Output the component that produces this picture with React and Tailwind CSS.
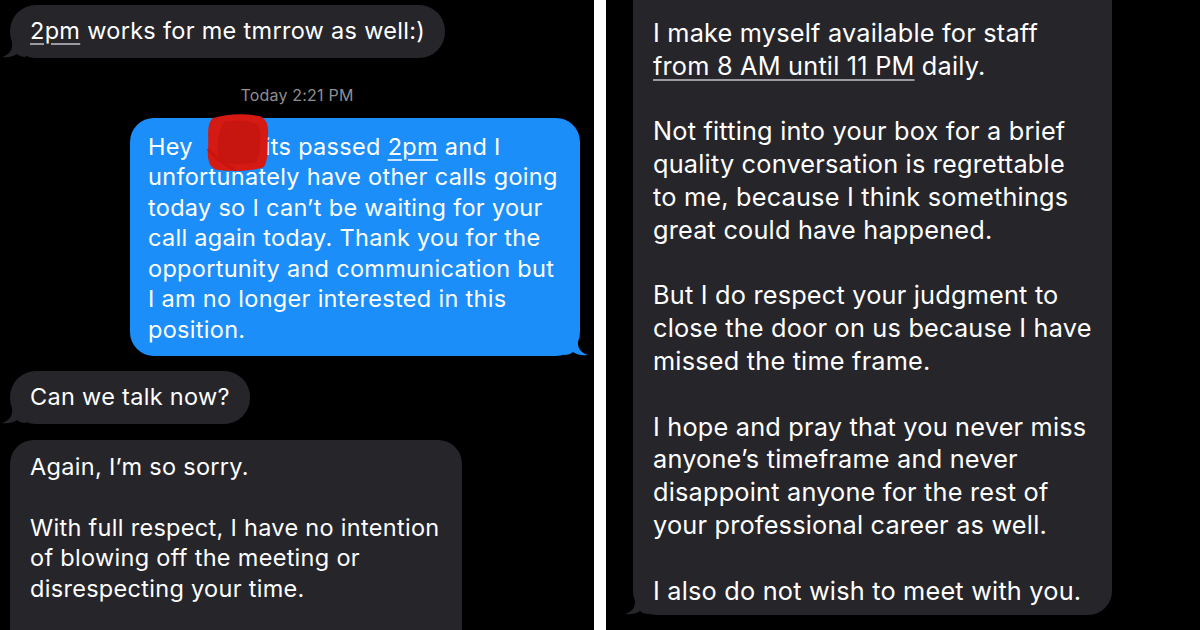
const font = { fontFamily: 'Inter, "Noto Sans", sans-serif' };

const TailLeft = ({ color }) => (
  <svg className="absolute -left-[8px] bottom-0" width="24" height="22" viewBox="0 0 24 22">
    <path d="M10 0 L10 10 C10 15 6 19 0 21 C7 22 12 20 15 18 C17 20 20 21 24 21 L24 0 Z" fill={color} />
  </svg>
);

const TailRight = ({ color }) => (
  <svg className="absolute -right-[8px] bottom-0" width="24" height="22" viewBox="0 0 24 22">
    <path d="M14 0 L14 10 C14 15 18 19 24 21 C17 22 12 20 9 18 C7 20 4 21 0 21 L0 0 Z" fill={color} />
  </svg>
);

const u = 'underline decoration-[1.5px] underline-offset-[4px] decoration-[#9a9aa0]';

export default function App() {
  return (
    <div className="flex w-[1200px] h-[630px] overflow-hidden bg-black text-white" style={font}>
      {/* left screenshot */}
      <div className="w-[594px] h-full bg-black flex flex-col pt-[5px] text-[23.5px] leading-[30.5px] tracking-[0.3px]">
        <div className="relative self-start ml-[10px] bg-[#26252a] rounded-[26px] px-[20px] py-[11px]">
          <span className={u}>2pm</span> works for me tmrrow as well:)
          <TailLeft color="#26252a" />
        </div>

        <div className="mt-[27px] text-center text-[16px] leading-[20px] text-[#8e8e93] tracking-[0.2px]">
          Today 2:21 PM
        </div>

        <div className="relative self-end mr-[14px] mt-[13px] w-[450px] bg-[#1b8ef9] rounded-[24px] pl-[18px] pr-[6px] pt-[14px] pb-[11px] whitespace-nowrap">
          Hey<span className="inline-block w-[72px]"></span>its passed <span className="underline decoration-[1.5px] underline-offset-[4px] decoration-[#cfe6ff]">2pm</span> and I<br />
          unfortunately have other calls going<br />
          today so I can’t be waiting for your<br />
          call again today. Thank you for the<br />
          opportunity and communication but<br />
          I am no longer interested in this<br />
          position.
          <svg className="absolute left-[74px] -top-[5px]" width="66" height="60" viewBox="0 0 66 60">
            <path d="M9 5 C22 1 40 0 55 3 C62 5 65 12 64 22 C63 34 65 46 60 54 C50 58 30 59 14 57 C6 56 3 48 4 36 C5 24 2 11 9 5 Z" fill="#d41a12" />
            <path d="M20 9 C32 7 46 7 54 12 C58 24 57 40 52 49 C40 52 26 52 16 48 C12 36 13 21 20 9 Z" fill="#bb120c" opacity="0.55" />
            <path d="M4 36 C10 44 18 50 30 56" stroke="#c9150f" strokeWidth="3" fill="none" />
          </svg>
          <TailRight color="#1b8ef9" />
        </div>

        <div className="relative self-start ml-[10px] mt-[15px] bg-[#26252a] rounded-[26px] px-[20px] py-[11px]">
          Can we talk now?
          <TailLeft color="#26252a" />
        </div>

        <div className="self-start ml-[10px] mt-[16px] w-[452px] flex-1 bg-[#26252a] rounded-t-[24px] px-[20px] pt-[12px] whitespace-nowrap">
          Again, I’m so sorry.<br />
          <br />
          With full respect, I have no intention<br />
          of blowing off the meeting or<br />
          disrespecting your time.
        </div>
      </div>

      {/* divider */}
      <div className="w-[12px] h-full bg-white" />

      {/* right screenshot */}
      <div className="flex-1 h-full bg-black pl-[27px] text-[25.3px] leading-[32.8px] tracking-[0.2px]">
        <div className="relative w-[479px] h-[615px] bg-[#26252a] rounded-b-[24px] pl-[20px] pt-[17px] whitespace-nowrap">
          I make myself available for staff<br />
          <span className={u}>from 8 AM until 11 PM</span> daily.<br />
          <br />
          Not fitting into your box for a brief<br />
          quality conversation is regrettable<br />
          to me, because I think somethings<br />
          great could have happened.<br />
          <br />
          But I do respect your judgment to<br />
          close the door on us because I have<br />
          missed the time frame.<br />
          <br />
          I hope and pray that you never miss<br />
          anyone’s timeframe and never<br />
          disappoint anyone for the rest of<br />
          your professional career as well.<br />
          <br />
          I also do not wish to meet with you.
          <TailLeft color="#26252a" />
        </div>
      </div>
    </div>
  );
}
